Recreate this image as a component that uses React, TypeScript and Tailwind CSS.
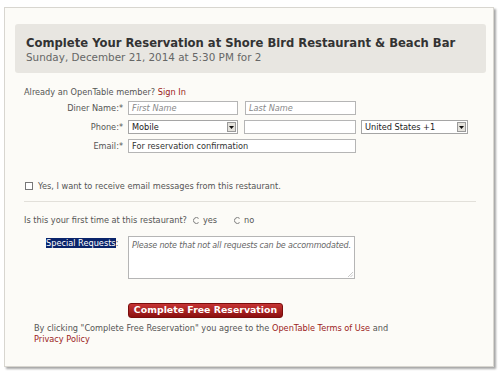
import React from 'react';

const font = { fontFamily: '"DejaVu Sans", Verdana, sans-serif' };

function SelectBox({ value, width }: { value: string; width: string }) {
  return (
    <div className={`flex h-[14px] items-center border border-[#a5a5a5] bg-white ${width}`}>
      <span className="flex-1 pl-[3px] text-[8.2px] text-[#222]">{value}</span>
      <span className="mr-px flex h-[10px] w-[9px] items-center justify-center border border-[#9a9a9a] bg-[#e4e2dc]">
        <svg width="5" height="3" viewBox="0 0 5 3">
          <path d="M0 0h5L2.5 3z" fill="#111" />
        </svg>
      </span>
    </div>
  );
}

function Radio() {
  return (
    <svg width="7" height="7" viewBox="0 0 7 7" className="mr-[3px]">
      <path d="M5.6 1.4A3 3 0 1 0 5.6 5.6" fill="none" stroke="#777" strokeWidth="1" />
    </svg>
  );
}

export default function App() {
  return (
    <div className="h-[381px] w-[500px] bg-white pl-[4px] pt-[7px]" style={font}>
      <div className="h-[360px] w-[490px] border border-[#d8d6d0] bg-[#fcfbf7] shadow-[2px_2px_2px_rgba(0,0,0,0.35)]">
        <div className="ml-[10px] mt-[16px] h-[49px] w-[471px] rounded-[3px] bg-[#e8e6e1] pl-[11px] pt-[12px]">
          <h1 className="text-[11.6px] font-bold leading-[14px] text-[#333]">
            Complete Your Reservation at Shore Bird Restaurant &amp; Beach Bar
          </h1>
          <p className="text-[10.4px] leading-[14px] text-[#666]">Sunday, December 21, 2014 at 5:30 PM for 2</p>
        </div>

        <div className="pl-[19px] pt-[14px] text-[8.2px] text-[#555]">
          <p className="leading-[11px]">
            Already an OpenTable member? <span className="text-[#9b1b1b]">Sign In</span>
          </p>

          <div className="mt-[3px] flex flex-col gap-[5px]">
            <div className="flex items-center">
              <span className="w-[104px] pr-[5px] text-right">Diner Name:*</span>
              <div className="flex h-[14px] w-[110px] items-center border border-[#b5b5b5] bg-white pl-[3px] italic text-[#888]">First Name</div>
              <div className="ml-[7px] flex h-[14px] w-[111px] items-center border border-[#b5b5b5] bg-white pl-[3px] italic text-[#888]">Last Name</div>
            </div>
            <div className="flex items-center">
              <span className="w-[104px] pr-[5px] text-right">Phone:*</span>
              <SelectBox value="Mobile" width="w-[110px]" />
              <div className="ml-[6px] h-[14px] w-[112px] border border-[#b5b5b5] bg-white" />
              <div className="ml-[5px]">
                <SelectBox value="United States +1" width="w-[107px]" />
              </div>
            </div>
            <div className="flex items-center">
              <span className="w-[104px] pr-[5px] text-right">Email:*</span>
              <div className="flex h-[14px] w-[228px] items-center border border-[#b5b5b5] bg-white pl-[3px] text-[#333]">For reservation confirmation</div>
            </div>
          </div>

          <div className="mt-[27px] flex items-center">
            <span className="ml-px h-[8px] w-[8px] border border-[#777] bg-white" />
            <span className="ml-[5px]">Yes, I want to receive email messages from this restaurant.</span>
          </div>

          <div className="mt-[9px] h-px w-[452px] bg-[#e2e0da]" />

          <div className="mt-[12px] flex items-center">
            <span>Is this your first time at this restaurant?</span>
            <span className="ml-[6px] flex items-center"><Radio />yes</span>
            <span className="ml-[17px] flex items-center"><Radio />no</span>
          </div>

          <div className="mt-[9px] flex items-start">
            <span className="w-[104px] pl-[22px] pt-[1px] leading-[12px]">
              <span className="bg-[#0a246a] text-white">Special Requests</span>:
            </span>
            <div className="relative h-[43px] w-[227px] whitespace-nowrap border border-[#b5b5b5] bg-white pl-[3px] pt-[3px] text-[8px] italic tracking-[-0.15px] text-[#666]">
              Please note that not all requests can be accommodated.
              <svg width="6" height="6" viewBox="0 0 6 6" className="absolute bottom-px right-px">
                <path d="M6 1L1 6M6 3.5L3.5 6" stroke="#bbb" strokeWidth="0.8" />
              </svg>
            </div>
          </div>

          <button className="ml-[104px] mt-[24px] flex h-[15px] w-[155px] items-center justify-center rounded-[3px] border border-[#7a0d0d] bg-gradient-to-b from-[#c63434] to-[#8c0f0f] text-[9.4px] font-bold text-white">
            Complete Free Reservation
          </button>

          <p className="ml-[10px] mt-[5px] leading-[11px]">
            By clicking "Complete Free Reservation" you agree to the <span className="text-[#9b1b1b]">OpenTable Terms of Use</span> and
            <br />
            <span className="text-[#9b1b1b]">Privacy Policy</span>
          </p>
        </div>
      </div>
    </div>
  );
}
